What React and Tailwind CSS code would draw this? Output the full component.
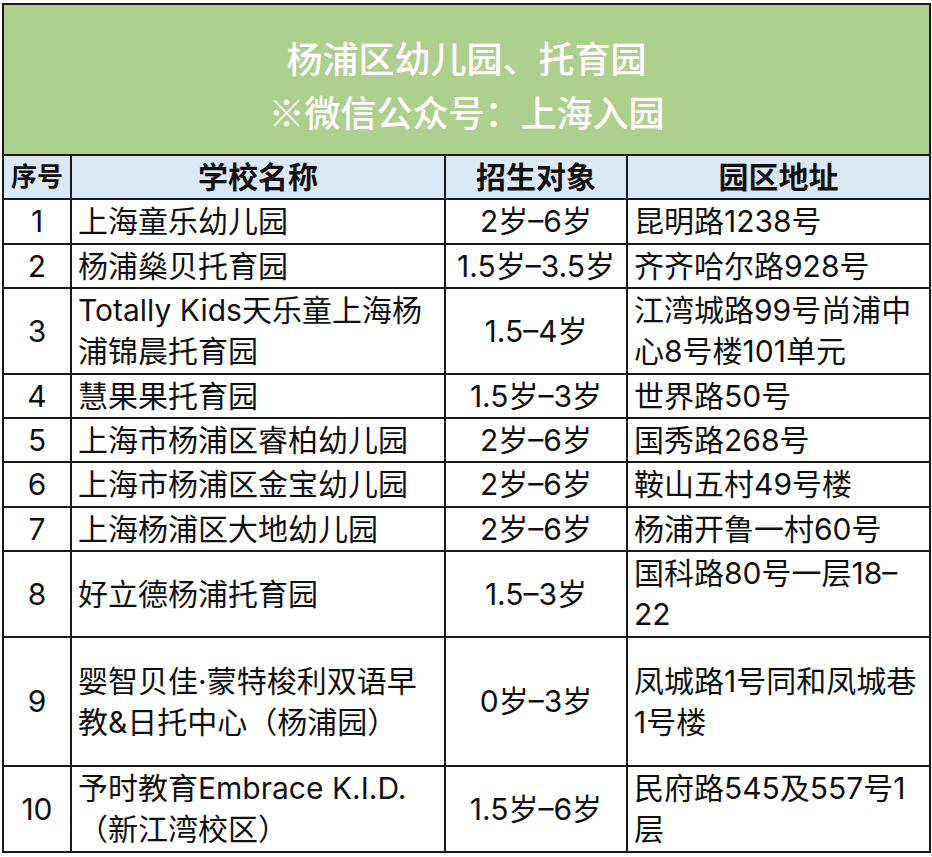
import React from 'react';

const rows = [
  { no: '1', name: ['上海童乐幼儿园'], age: '2岁–6岁', addr: ['昆明路1238号'], h: 'h-[45px]' },
  { no: '2', name: ['杨浦燊贝托育园'], age: '1.5岁–3.5岁', addr: ['齐齐哈尔路928号'], h: 'h-[44px]' },
  { no: '3', name: ['Totally Kids天乐童上海杨', '浦锦晨托育园'], age: '1.5–4岁', addr: ['江湾城路99号尚浦中', '心8号楼101单元'], h: 'h-[86px]' },
  { no: '4', name: ['慧果果托育园'], age: '1.5岁–3岁', addr: ['世界路50号'], h: 'h-[44px]' },
  { no: '5', name: ['上海市杨浦区睿柏幼儿园'], age: '2岁–6岁', addr: ['国秀路268号'], h: 'h-[44px]' },
  { no: '6', name: ['上海市杨浦区金宝幼儿园'], age: '2岁–6岁', addr: ['鞍山五村49号楼'], h: 'h-[45px]' },
  { no: '7', name: ['上海杨浦区大地幼儿园'], age: '2岁–6岁', addr: ['杨浦开鲁一村60号'], h: 'h-[44px]' },
  { no: '8', name: ['好立德杨浦托育园'], age: '1.5–3岁', addr: ['国科路80号一层18–', '22'], h: 'h-[86px]' },
  { no: '9', name: ['婴智贝佳·蒙特梭利双语早', '教&日托中心（杨浦园）'], age: '0岁–3岁', addr: ['凤城路1号同和凤城巷', '1号楼'], h: 'h-[129px]' },
  { no: '10', name: ['予时教育Embrace K.I.D.', '（新江湾校区）'], age: '1.5岁–6岁', addr: ['民府路545及557号1', '层'], h: 'h-[86px]' },
];

function Lines({ lines }) {
  return lines.map((l, i) => (
    <div key={i} className="whitespace-nowrap">{l}</div>
  ));
}

export default function App() {
  return (
    <div className="w-[932px] h-[857px] bg-white pt-[3px] pl-[2px] font-['Inter','Noto_Sans_CJK_SC',sans-serif] text-[#111]">
      <table className="table-fixed border-collapse w-[927px]">
        <colgroup>
          <col className="w-[68px]" />
          <col className="w-[374px]" />
          <col className="w-[182px]" />
          <col className="w-[303px]" />
        </colgroup>
        <tbody>
          <tr className="h-[151px]">
            <td colSpan={4} className="border-2 border-[#1a1a1a] bg-[#acd08e] pt-[8px] text-center text-white text-[36px] leading-[54px] font-medium font-['Noto_Sans_CJK_SC',sans-serif]">
              <div>杨浦区幼儿园、托育园</div>
              <div>※微信公众号：上海入园</div>
            </td>
          </tr>
          <tr className="h-[44px] bg-[#dde8f5] font-bold text-[30px] leading-[40px]">
            <td className="border-2 border-[#1a1a1a] text-center text-[26px] px-0">序号</td>
            <td className="border-2 border-[#1a1a1a] text-center">学校名称</td>
            <td className="border-2 border-[#1a1a1a] text-center">招生对象</td>
            <td className="border-2 border-[#1a1a1a] text-center">园区地址</td>
          </tr>
          {rows.map((r) => (
            <tr key={r.no} className={`${r.h} text-[30px] leading-[41px]`}>
              <td className="border-2 border-[#1a1a1a] text-center">{r.no}</td>
              <td className="border-2 border-[#1a1a1a] pl-[6px]"><Lines lines={r.name} /></td>
              <td className="border-2 border-[#1a1a1a] text-center whitespace-nowrap">{r.age}</td>
              <td className="border-2 border-[#1a1a1a] pl-[6px]"><Lines lines={r.addr} /></td>
            </tr>
          ))}
        </tbody>
      </table>
    </div>
  );
}
